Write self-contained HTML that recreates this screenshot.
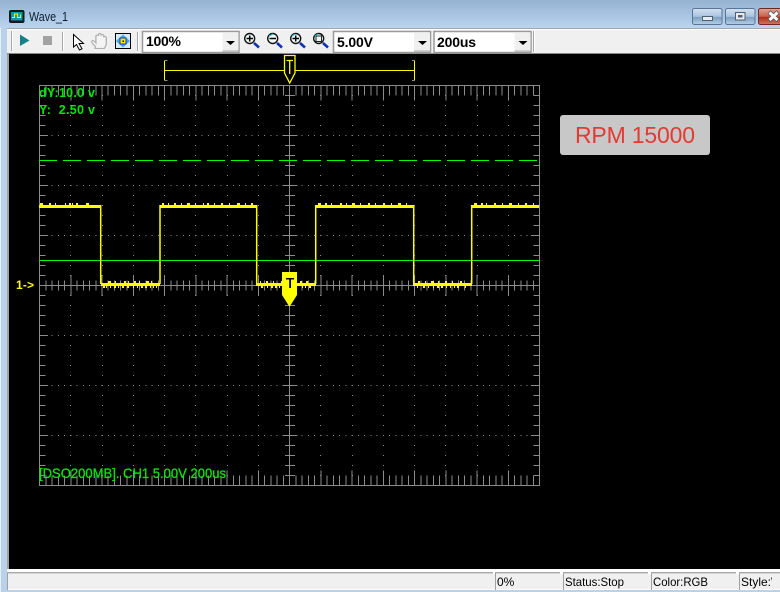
<!DOCTYPE html>
<html><head><meta charset="utf-8"><title>Wave_1</title>
<style>
html,body{margin:0;padding:0;background:#000;width:780px;height:592px;overflow:hidden}
svg{display:block}
text{font-family:"Liberation Sans",sans-serif}
</style></head><body>
<svg width="780" height="592" viewBox="0 0 780 592" xmlns="http://www.w3.org/2000/svg">
<defs>
<linearGradient id="t" x1="0" y1="0" x2="0" y2="1"><stop offset="0" stop-color="#95b2d1"/><stop offset="1" stop-color="#bad4f0"/></linearGradient>
<linearGradient id="b" x1="0" y1="0" x2="0" y2="1"><stop offset="0" stop-color="#d4e2f1"/><stop offset=".5" stop-color="#a9c3de"/><stop offset=".55" stop-color="#7f9fc0"/><stop offset="1" stop-color="#b5cfe8"/></linearGradient>
<linearGradient id="r" x1="0" y1="0" x2="0" y2="1"><stop offset="0" stop-color="#e0a698"/><stop offset=".5" stop-color="#c8604c"/><stop offset=".55" stop-color="#ae2e1a"/><stop offset="1" stop-color="#cf7a5e"/></linearGradient>
<clipPath id="st"><rect x="739" y="574" width="33" height="16"/></clipPath>
</defs>
<!-- frame -->
<rect width="780" height="592" fill="#b9d1ea"/>
<rect width="780" height="28" fill="url(#t)"/>
<rect x="0" y="28" width="1" height="564" fill="#e8eef5"/>
<rect x="7" y="28" width="2" height="545" fill="#a0a0a0"/>
<rect x="9" y="54" width="771" height="515" fill="#000"/>
<!-- title -->
<g>
<rect x="9.500" y="10.500" width="14.500" height="12" rx="1.500" fill="#0a1c22" stroke="#10181c"/>
<rect x="11" y="12" width="11.500" height="8.500" fill="#0f9ba3"/>
<path d="M12 17.500h2.500v-3.500h3v3.500h3v-3" fill="none" stroke="#f7ea3c" stroke-width="1.100"/>
<text x="29" y="21" font-size="13" fill="#0e1c2e" textLength="39" lengthAdjust="spacingAndGlyphs">Wave_1</text>
</g>
<!-- window buttons -->
<rect x="692.500" y="8.500" width="29.500" height="16" rx="2" fill="url(#b)" stroke="#5b7694"/>
<rect x="702.500" y="16.500" width="10" height="4" fill="#e8ecf0" stroke="#4f6072" stroke-width="1"/>
<rect x="725.500" y="8.500" width="29.500" height="16" rx="2" fill="url(#b)" stroke="#5b7694"/>
<rect x="735.500" y="12.500" width="9.500" height="7.500" fill="#e8ecf0" stroke="#4f6072"/>
<rect x="738" y="15" width="4.500" height="2.500" fill="#4f6072"/>
<rect x="758.500" y="8.500" width="24" height="16" rx="2" fill="url(#r)" stroke="#6e2a22"/>
<path d="M769 12l9 8.500M778 12l-9 8.500" stroke="#4a5560" stroke-width="4.500"/>
<path d="M769.500 12.500l8 7.500M777.500 12.500l-8 7.500" stroke="#f8f8f8" stroke-width="3"/>
<!-- toolbar -->
<rect x="7" y="28" width="773" height="26" fill="#f0f0f0"/>
<rect x="7" y="28" width="773" height="1" fill="#a6a6a6"/>
<rect x="7" y="29" width="773" height="1" fill="#fff"/>
<rect x="7" y="53" width="773" height="1" fill="#8a8a8a"/>
<path d="M11.500 31v20M62.500 32v19M137.500 32v19M533.500 31v21" stroke="#a8a8a8"/>
<path d="M12.500 31v20M63.500 32v19M138.500 32v19M534.500 31v21" stroke="#fff"/>
<path d="M20 34.500L29.500 40.500L20 46z" fill="#138288"/>
<rect x="43" y="36" width="9" height="9" fill="#a2a2a2"/>
<path d="M73.500 34.500v12.500l3-2.500 3 5.500 2.500-1.200-3-5.300h4.500z" fill="#fff" stroke="#000" stroke-width="1"/>
<path transform="translate(92 33) scale(1.300 1.100) translate(-92.500 -33)" d="M95 45c-2-2-3-4-2.500-5 1-.5 2 .5 3 2v-6c0-1.500 2-1.500 2 0v-1.500c0-1.500 2-1.500 2 0v1c0-1.500 2-1.500 2 0v1.500c0-1.500 2-1 2 .5v5c0 2-1 3-1.500 4.500h-7z" fill="#f4f4f4" stroke="#b0b0b0"/>
<rect x="115.500" y="33.500" width="15" height="15" fill="#d4ecf6" stroke="#000"/>
<path d="M123 34.500L130 41 123 47.500 116 41z" fill="#45a6ee"/>
<rect x="120" y="38" width="6" height="6" fill="#ffe800" stroke="#1a3ab0"/>
<rect x="122.500" y="40.500" width="1.500" height="1.500" fill="#111"/>
<!-- combos -->
<g>
<rect x="142.500" y="31.500" width="96.500" height="21" fill="#fff" stroke="#9a9a9a" stroke-width="1.500"/>
<rect x="222.500" y="33" width="16" height="18" fill="#f0f0f0"/><rect x="222.500" y="50.500" width="16" height="1" fill="#b0b0b0"/>
<path d="M226 41h9l-4.500 4z" fill="#000"/>
<text x="146" y="46" font-size="14" font-weight="700" fill="#000" textLength="35">100%</text>
<rect x="333.500" y="31.500" width="97" height="21" fill="#fff" stroke="#9a9a9a" stroke-width="1.500"/>
<rect x="414" y="33" width="16" height="18" fill="#f0f0f0"/><rect x="414" y="50.500" width="16" height="1" fill="#b0b0b0"/>
<path d="M418 41h9l-4.500 4z" fill="#000"/>
<text x="337" y="47" font-size="14" font-weight="700" fill="#000" textLength="36">5.00V</text>
<rect x="434" y="31.500" width="97" height="21" fill="#fff" stroke="#9a9a9a" stroke-width="1.500"/>
<rect x="514.500" y="33" width="16" height="18" fill="#f0f0f0"/><rect x="514.500" y="50.500" width="16" height="1" fill="#b0b0b0"/>
<path d="M518.500 41h9l-4.500 4z" fill="#000"/>
<text x="437" y="47" font-size="14" font-weight="700" fill="#000" textLength="39">200us</text>
</g>
<!-- magnifiers -->
<g fill="#eef8fb" stroke="#111" stroke-width="1.400">
<circle cx="249.700" cy="38.500" r="5"/><circle cx="272.700" cy="38.500" r="5"/><circle cx="295.700" cy="38.500" r="5"/><circle cx="318.700" cy="38.500" r="5"/>
</g>
<path d="M254 43l5 4.500M277 43l5 4.500M300 43l5 4.500M323 43l5 4.500" stroke="#1030b0" stroke-width="2.600"/>
<path d="M246.500 38.500h6.500M249.700 35.500v6M269.500 38.500h6.500M292.500 38.500h6.500M295.700 35.500v6" stroke="#000" stroke-width="1.500"/>
<rect x="316" y="36" width="5.500" height="5.500" fill="none" stroke="#222"/>
<path d="M269 36l4-2M292 36l3-2M315 36l3-2" stroke="#25b8c4" stroke-width="1.200"/>
<!-- top trigger range -->
<g fill="none">
<path d="M165 70.500H284M295 70.500H414.500" stroke="#ffff00" stroke-width="1" shape-rendering="crispEdges"/>
<path d="M164.500 60.500V80.500M414.500 60.500V80.500" stroke="#ffff00" stroke-width="1" shape-rendering="crispEdges"/>
<path d="M165 60.500h2.500M165 80.500h2.500M412 60.500h2.500M412 80.500h2.500" stroke="#909090"/>
<path d="M284.500 55.500H295V73L289.700 83 284.500 73Z" stroke="#ffff00" stroke-width="1.300"/>
<path d="M286.500 60.500H293M289.700 60.500V74" stroke="#ffff00" stroke-width="1.300"/>
</g>
<!-- grid -->
<g fill="none" stroke="#8c8c8c" shape-rendering="crispEdges">
<rect x="39.500" y="85.500" width="500" height="400"/>
<path d="M39 285.500H540M289.500 85V486"/>
<path d="M39 90.500H540" stroke-width="10" stroke-dasharray="1 5.250"/>
<path d="M39 93H540" stroke-width="15" stroke-dasharray="1 30.250"/>
<path d="M39 480.500H540" stroke-width="10" stroke-dasharray="1 5.250"/>
<path d="M39 478H540" stroke-width="15" stroke-dasharray="1 30.250"/>
<path d="M39 285.500H540" stroke-width="10" stroke-dasharray="1 5.250"/>
<path d="M39 285.500H540" stroke-width="21" stroke-dasharray="1 30.250"/>
<path d="M42.500 85V486" stroke-width="6" stroke-dasharray="1 9"/>
<path d="M43.500 85V486" stroke-width="9" stroke-dasharray="1 49"/>
<path d="M536.500 85V486" stroke-width="6" stroke-dasharray="1 9"/>
<path d="M535.500 85V486" stroke-width="9" stroke-dasharray="1 49"/>
<path d="M290 85V486" stroke-width="10" stroke-dasharray="1 9"/>
<path d="M290 85V486" stroke-width="15" stroke-dasharray="1 49"/>
<path d="M39 135.500H540M39 185.500H540M39 235.500H540M39 335.500H540M39 385.500H540M39 435.500H540" stroke-dasharray="1 5.250"/>
<path d="M70.500 85V486M102.500 85V486M133.500 85V486M164.500 85V486M195.500 85V486M227.500 85V486M258.500 85V486M320.500 85V486M352.500 85V486M383.500 85V486M414.500 85V486M445.500 85V486M477.500 85V486M508.500 85V486" stroke-dasharray="1 9"/>
</g>
<!-- green level lines -->
<path d="M39 160.500H539" stroke="#00ff00" stroke-width="1" stroke-dasharray="18 6" shape-rendering="crispEdges"/>
<path d="M39 260.500H540" stroke="#00ff00" stroke-width="1" shape-rendering="crispEdges"/>
<!-- waveform -->
<g fill="#ffff00" shape-rendering="crispEdges">
<rect x="39" y="205" width="62" height="3"/><rect x="160" y="205" width="97" height="3"/><rect x="316" y="205" width="98" height="3"/><rect x="472" y="205" width="67" height="3"/>
<rect x="101" y="283" width="59" height="3"/><rect x="256" y="283" width="60" height="3"/><rect x="413" y="283" width="59" height="3"/>
</g>
<path d="M100.700 205V284M160 205V284M256.700 205V284M315.700 205V284M413.700 205V284M471.700 205V284" stroke="#ffff00" stroke-width="1.500" fill="none"/>
<path d="M40 204h3M49 204h2M55 204h1M65 204h1M69 204h2M72 204h1M76 204h2M86 204h3M162 204h2M168 204h1M174 204h2M181 204h1M187 204h3M195 204h1M203 204h1M207 204h2M214 204h1M221 204h2M229 204h1M237 204h3M245 204h1M251 204h2M318 204h3M325 204h2M331 204h1M340 204h2M346 204h1M352 204h3M360 204h1M368 204h2M375 204h1M383 204h2M391 204h1M398 204h3M406 204h1M474 204h3M481 204h2M486 204h1M494 204h2M502 204h1M509 204h3M518 204h1M525 204h2M533 204h1" stroke="#ffff00" fill="none" stroke-width="2" shape-rendering="crispEdges"/>
<path d="M108 282h3M115 282h1M124 282h2M128 282h1M134 282h2M139 282h1M146 282h3M151 282h1M260 282h1M266 282h2M273 282h1M281 282h1M300 282h2M306 282h2M418 282h2M425 282h1M431 282h3M438 282h1M445 282h2M452 282h1M460 282h2" stroke="#ffff00" fill="none" stroke-width="2" shape-rendering="crispEdges"/>
<path d="M103 287h2M106 287h1M110 287h1M114 287h2M118 287h1M122 287h2M127 287h2M133 287h1M137 287h1M141 287h2M145 287h2M150 287h1M153 287h1M156 287h1M261 287h2M267 287h1M271 287h2M275 287h2M279 287h1M302 287h1M305 287h1M309 287h2M417 287h1M423 287h2M428 287h1M433 287h1M437 287h2M441 287h2M446 287h1M450 287h1M454 287h1M457 287h2M465 287h1" stroke="#ffff00" fill="none" stroke-width="2" shape-rendering="crispEdges"/>
<!-- trigger marker -->
<path d="M282 272H297V295L290 306H289L282 295Z" fill="#ffff00"/>
<path d="M286 278H294V279.500H291V288H289.200V279.500H286Z" fill="#000"/>
<!-- grid labels -->
<g font-size="12.500" font-weight="700" fill="#00e600">
<text x="39" y="97" textLength="56">dY:10.0 v</text>
<text x="39" y="114" textLength="56" xml:space="preserve">Y:  2.50 v</text>
</g>
<text x="39" y="478" font-size="14" fill="#00e800" stroke="#00e800" stroke-width=".3" textLength="187" lengthAdjust="spacingAndGlyphs">[DSO200MB]. CH1 5.00V 200us</text>
<text x="16" y="289" font-size="12" font-weight="700" fill="#ffff00" textLength="18">1-&gt;</text>
<!-- RPM -->
<rect x="560" y="115" width="150" height="40" rx="3" fill="#c8c8c8"/>
<text x="575" y="143" font-size="23" fill="#e53a33" textLength="120">RPM 15000</text>
<!-- status bar -->
<rect x="7" y="569" width="773" height="21" fill="#fff"/>
<rect x="7" y="572" width="773" height="1.500" fill="#a8a8a8"/>
<rect x="8" y="574" width="772" height="15" fill="#f0f0f0"/>
<g fill="#a0a0a0">
<rect x="7" y="573" width="1" height="17"/>
<rect x="495" y="573" width="1" height="17"/><rect x="563" y="573" width="1" height="17"/><rect x="651" y="573" width="1" height="17"/><rect x="739" y="573" width="1" height="17"/>
</g>
<path d="M493 573h2M560 573h3M648 573h3M736 573h3" stroke="#fff" stroke-width="2"/>
<g font-size="12" fill="#000">
<text x="497" y="586">0%</text>
<text x="565" y="586" textLength="59" lengthAdjust="spacingAndGlyphs">Status:Stop</text>
<text x="653" y="586" textLength="55" lengthAdjust="spacingAndGlyphs">Color:RGB</text>
<text x="741" y="586" clip-path="url(#st)">Style:Wave</text>
</g>
</svg>
</body></html>
